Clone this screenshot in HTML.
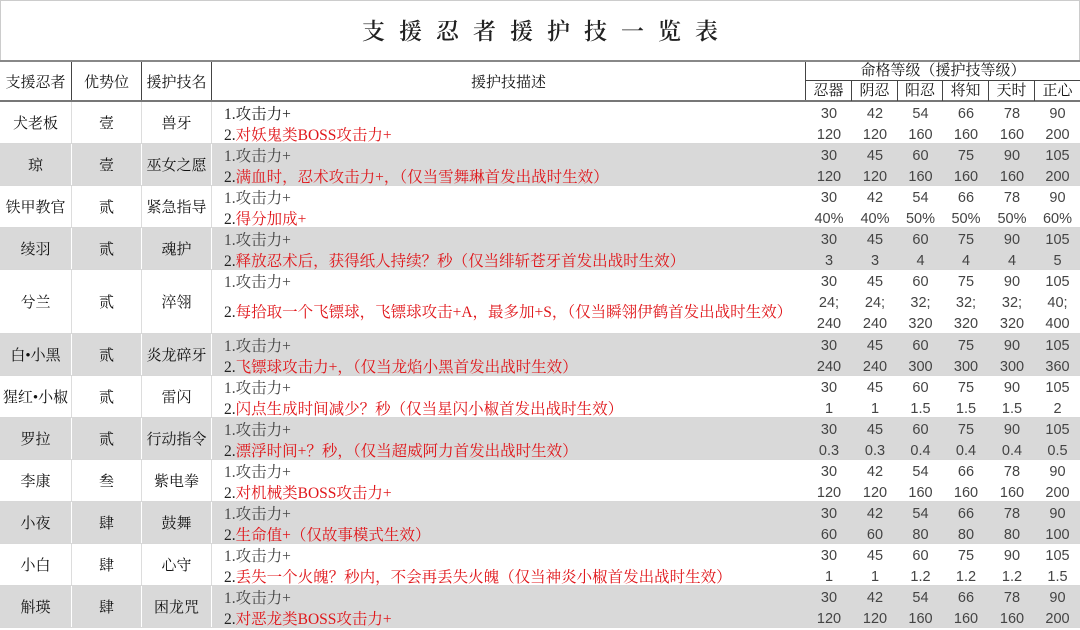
<!DOCTYPE html>
<html><head><meta charset="utf-8"><style>
*{margin:0;padding:0;box-sizing:border-box}
body{width:1080px;height:628px;background:#fff;overflow:hidden;font-family:"Liberation Serif","Noto Serif CJK SC",serif;font-size:15px;color:#111;position:relative}
.title{position:absolute;left:0;top:0;width:1080px;height:60px;text-align:center;line-height:62px;font-size:23px;letter-spacing:14px;padding-left:14px;font-weight:600;color:#222;border:1px solid #ccc;border-bottom:none}
.hdr{position:absolute;top:60px;left:0;width:1080px;height:42px;border-top:2px solid #888;border-bottom:2px solid #777;display:flex}
.hdr>div{border-right:1px solid #444;display:flex;align-items:center;justify-content:center}
.rt{flex-direction:column;border-right:none!important}
.rt .t{height:20px;line-height:20px;width:100%;text-align:center;border-bottom:1px solid #444}
.rt .b{display:flex;height:20px;width:100%}
.rt .b div{border-right:1px solid #444;text-align:center;line-height:20px}
.rt .b div:last-child{border-right:none}
.r{position:absolute;left:0;width:1080px;display:flex;border-bottom:1px solid #d8d8d8}
.g{background:#d9d9d9}
.r>.c{display:flex;align-items:center;justify-content:center;border-right:1px solid #ddd}
.g>.c{border-right:1px solid #fff}
.d{width:594px;padding-left:12px;padding-top:2px;line-height:21px;color:#444;font-size:15.5px}
.d .red{color:#e0161a}
.d span.k{color:#222}
.n{width:46px;text-align:center;line-height:21px;padding-top:2px;color:#444;font-family:"Liberation Sans",sans-serif;font-size:14.5px}
.w5{width:45px}
</style></head><body>
<div class="title">支援忍者援护技一览表</div>
<div class="hdr">
<div style="width:72px">支援忍者</div><div style="width:70px">优势位</div><div style="width:70px">援护技名</div><div style="width:594px">援护技描述</div>
<div class="rt" style="width:274px"><div class="t">命格等级（援护技等级）</div><div class="b"><div style="width:46px">忍器</div><div style="width:46px">阴忍</div><div style="width:45px">阳忍</div><div style="width:46px">将知</div><div style="width:46px">天时</div><div style="width:45px">正心</div></div></div>
</div>

<div class="r" style="top:102px;height:42px"><div class="c" style="width:72px">犬老板</div><div class="c" style="width:70px">壹</div><div class="c" style="width:70px">兽牙</div><div class="d"><span class="k">1.攻击力+</span><br><span class="k">2.</span><span class="red">对妖鬼类BOSS攻击力+</span></div><div class="n">30<br>120</div><div class="n">42<br>120</div><div class="n w5">54<br>160</div><div class="n">66<br>160</div><div class="n">78<br>160</div><div class="n w5">90<br>200</div></div>

<div class="r g" style="top:144px;height:42px"><div class="c" style="width:72px">琼</div><div class="c" style="width:70px">壹</div><div class="c" style="width:70px">巫女之愿</div><div class="d">1.攻击力+<br><span class="k">2.</span><span class="red">满血时，忍术攻击力+，（仅当雪舞琳首发出战时生效）</span></div><div class="n">30<br>120</div><div class="n">45<br>120</div><div class="n w5">60<br>160</div><div class="n">75<br>160</div><div class="n">90<br>160</div><div class="n w5">105<br>200</div></div>

<div class="r" style="top:186px;height:42px"><div class="c" style="width:72px">铁甲教官</div><div class="c" style="width:70px">贰</div><div class="c" style="width:70px">紧急指导</div><div class="d">1.攻击力+<br><span class="k">2.</span><span class="red">得分加成+</span></div><div class="n">30<br>40%</div><div class="n">42<br>40%</div><div class="n w5">54<br>50%</div><div class="n">66<br>50%</div><div class="n">78<br>50%</div><div class="n w5">90<br>60%</div></div>

<div class="r g" style="top:228px;height:42px"><div class="c" style="width:72px">绫羽</div><div class="c" style="width:70px">贰</div><div class="c" style="width:70px">魂护</div><div class="d">1.攻击力+<br><span class="k">2.</span><span class="red">释放忍术后，获得纸人持续？秒（仅当绯斩苍牙首发出战时生效）</span></div><div class="n">30<br>3</div><div class="n">45<br>3</div><div class="n w5">60<br>4</div><div class="n">75<br>4</div><div class="n">90<br>4</div><div class="n w5">105<br>5</div></div>

<div class="r" style="top:270px;height:64px"><div class="c" style="width:72px">兮兰</div><div class="c" style="width:70px">贰</div><div class="c" style="width:70px">淬翎</div><div class="d" style="line-height:20px;padding-top:3px">1.攻击力+<br><div style="height:10px"></div><span class="k">2.</span><span class="red">每拾取一个飞镖球，飞镖球攻击+A，最多加+S，（仅当瞬翎伊鹤首发出战时生效）</span></div><div class="n">30<br>24;<br>240</div><div class="n">45<br>24;<br>240</div><div class="n w5">60<br>32;<br>320</div><div class="n">75<br>32;<br>320</div><div class="n">90<br>32;<br>320</div><div class="n w5">105<br>40;<br>400</div></div>

<div class="r g" style="top:334px;height:42px"><div class="c" style="width:72px">白•小黑</div><div class="c" style="width:70px">贰</div><div class="c" style="width:70px">炎龙碎牙</div><div class="d">1.攻击力+<br><span class="k">2.</span><span class="red">飞镖球攻击力+，（仅当龙焰小黑首发出战时生效）</span></div><div class="n">30<br>240</div><div class="n">45<br>240</div><div class="n w5">60<br>300</div><div class="n">75<br>300</div><div class="n">90<br>300</div><div class="n w5">105<br>360</div></div>

<div class="r" style="top:376px;height:42px"><div class="c" style="width:72px">猩红•小椒</div><div class="c" style="width:70px">贰</div><div class="c" style="width:70px">雷闪</div><div class="d">1.攻击力+<br><span class="k">2.</span><span class="red">闪点生成时间减少？秒（仅当星闪小椒首发出战时生效）</span></div><div class="n">30<br>1</div><div class="n">45<br>1</div><div class="n w5">60<br>1.5</div><div class="n">75<br>1.5</div><div class="n">90<br>1.5</div><div class="n w5">105<br>2</div></div>

<div class="r g" style="top:418px;height:42px"><div class="c" style="width:72px">罗拉</div><div class="c" style="width:70px">贰</div><div class="c" style="width:70px">行动指令</div><div class="d">1.攻击力+<br><span class="k">2.</span><span class="red">漂浮时间+？秒，（仅当超威阿力首发出战时生效）</span></div><div class="n">30<br>0.3</div><div class="n">45<br>0.3</div><div class="n w5">60<br>0.4</div><div class="n">75<br>0.4</div><div class="n">90<br>0.4</div><div class="n w5">105<br>0.5</div></div>

<div class="r" style="top:460px;height:42px"><div class="c" style="width:72px">李康</div><div class="c" style="width:70px">叁</div><div class="c" style="width:70px">紫电拳</div><div class="d">1.攻击力+<br><span class="k">2.</span><span class="red">对机械类BOSS攻击力+</span></div><div class="n">30<br>120</div><div class="n">42<br>120</div><div class="n w5">54<br>160</div><div class="n">66<br>160</div><div class="n">78<br>160</div><div class="n w5">90<br>200</div></div>

<div class="r g" style="top:502px;height:42px"><div class="c" style="width:72px">小夜</div><div class="c" style="width:70px">肆</div><div class="c" style="width:70px">鼓舞</div><div class="d">1.攻击力+<br><span class="k">2.</span><span class="red">生命值+（仅故事模式生效）</span></div><div class="n">30<br>60</div><div class="n">42<br>60</div><div class="n w5">54<br>80</div><div class="n">66<br>80</div><div class="n">78<br>80</div><div class="n w5">90<br>100</div></div>

<div class="r" style="top:544px;height:42px"><div class="c" style="width:72px">小白</div><div class="c" style="width:70px">肆</div><div class="c" style="width:70px">心守</div><div class="d">1.攻击力+<br><span class="k">2.</span><span class="red">丢失一个火魄？秒内，不会再丢失火魄（仅当神炎小椒首发出战时生效）</span></div><div class="n">30<br>1</div><div class="n">45<br>1</div><div class="n w5">60<br>1.2</div><div class="n">75<br>1.2</div><div class="n">90<br>1.2</div><div class="n w5">105<br>1.5</div></div>

<div class="r g" style="top:586px;height:42px"><div class="c" style="width:72px">斛瑛</div><div class="c" style="width:70px">肆</div><div class="c" style="width:70px">困龙咒</div><div class="d">1.攻击力+<br><span class="k">2.</span><span class="red">对恶龙类BOSS攻击力+</span></div><div class="n">30<br>120</div><div class="n">42<br>120</div><div class="n w5">54<br>160</div><div class="n">66<br>160</div><div class="n">78<br>160</div><div class="n w5">90<br>200</div></div>
</body></html>
